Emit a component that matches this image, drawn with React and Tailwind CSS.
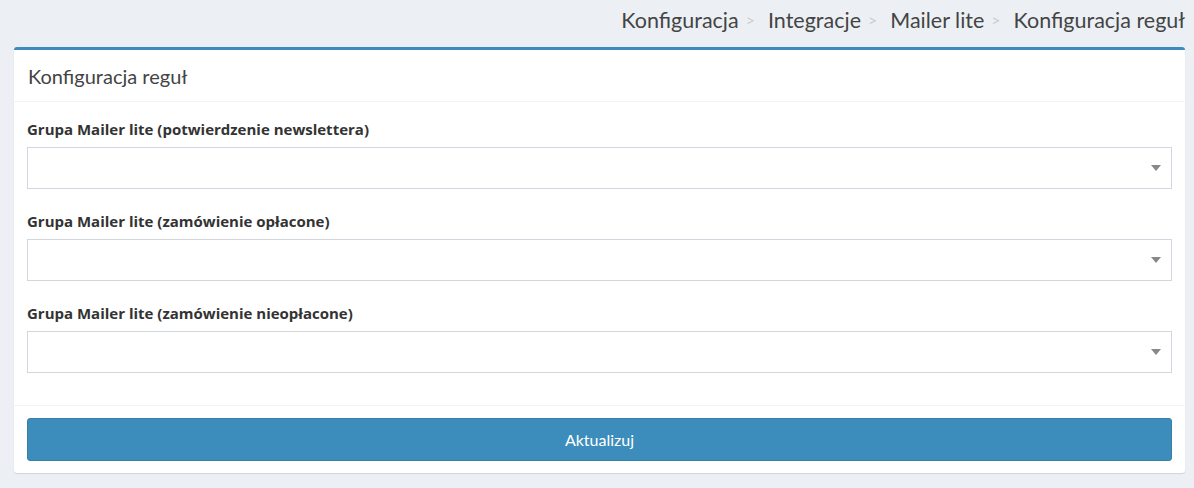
import React from "react";

const crumbs = ["Konfiguracja", "Integracje", "Mailer lite", "Konfiguracja reguł"];

const fields = [
  "Grupa Mailer lite (potwierdzenie newslettera)",
  "Grupa Mailer lite (zamówienie opłacone)",
  "Grupa Mailer lite (zamówienie nieopłacone)",
];

function SelectBox() {
  return (
    <div className="relative h-[42px] w-full border border-[#d2d6de] bg-white">
      <span className="absolute right-[10px] top-[17px] h-0 w-0 border-x-[5px] border-t-[6px] border-x-transparent border-t-[#888]" />
    </div>
  );
}

export default function App() {
  return (
    <div
      className="min-h-[488px] w-[1194px] overflow-hidden bg-[#ecf0f5] text-[#333]"
      style={{ fontFamily: "Lato, 'Noto Sans', sans-serif" }}
    >
      <div className="flex h-[47px] items-center justify-end whitespace-nowrap pb-[7px] pr-[9px] text-[21.5px] text-[#444]">
        {crumbs.map((c, i) => (
          <span key={c} className="flex items-center">
            {i > 0 && <span className="pl-[7px] pr-[13px] text-[16px] text-[#ccc]">&gt;</span>}
            <span>{c}</span>
          </span>
        ))}
      </div>

      <div className="ml-[14px] mr-[9px] rounded-[3px] border-t-[3px] border-[#3c8dbc] bg-white shadow-[0_1px_1px_rgba(0,0,0,0.12)]">
        <div className="flex h-[52px] items-center border-b border-[#f4f4f4] px-[14px] text-[20px] text-[#444]">
          Konfiguracja reguł
        </div>

        <div className="flex flex-col gap-[22px] px-[13px] pb-[32px] pt-[17px]">
          {fields.map((f) => (
            <div key={f} className="flex flex-col gap-[8px]">
              <label
                className="text-[15px] font-bold leading-[20px] text-[#333]"
                style={{ fontFamily: "'Open Sans', sans-serif" }}
              >
                {f}
              </label>
              <SelectBox />
            </div>
          ))}
        </div>

        <div className="border-t border-[#f4f4f4] px-[13px] pb-[12px] pt-[12px]">
          <button className="flex h-[43px] w-full items-center justify-center rounded-[3px] border border-[#367fa9] bg-[#3c8dbc] text-[16px] text-white">
            Aktualizuj
          </button>
        </div>
      </div>
    </div>
  );
}
